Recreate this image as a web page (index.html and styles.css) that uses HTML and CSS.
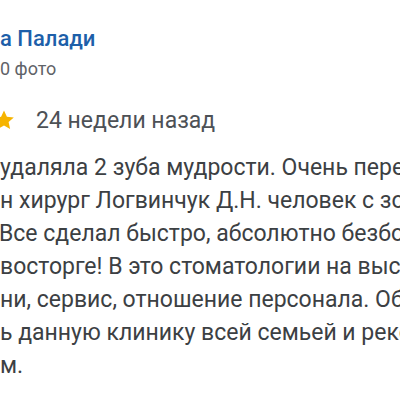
FILE: index.html
```html
<!DOCTYPE html>
<html lang="ru">
<head>
<meta charset="utf-8">
<link rel="stylesheet" href="styles.css">
</head>
<body>
<div class="review">
  <div class="author">
    <div class="name">а Палади</div>
    <div class="meta">0 фото</div>
  </div>
  <div class="rating">
    <svg class="star" viewBox="0 0 24 24" width="24" height="24"><path d="M12 2.5l2.9 6.3 6.9.7-5.2 4.6 1.5 6.8L12 17.4l-6.1 3.5 1.5-6.8-5.2-4.6 6.9-.7z" fill="#f6b400"/></svg>
    <span class="date">24 недели назад</span>
  </div>
  <div class="text">
    <div class="line">удаляла 2 зуба мудрости. Очень переживала.</div>
    <div class="line">н хирург Логвинчук Д.Н. человек с золотыми</div>
    <div class="line l3">Все сделал быстро, абсолютно безболезненно.</div>
    <div class="line l4">восторге! В это стоматологии на высоте всё:</div>
    <div class="line">ни, сервис, отношение персонала. Обслуживаемся</div>
    <div class="line">ь данную клинику всей семьей и рекомендуем</div>
    <div class="line">м.</div>
  </div>
</div>
</body>
</html>
```
FILE: styles.css
```css
html, body {
  margin: 0;
  padding: 0;
  background: #ffffff;
}
body {
  width: 400px;
  height: 400px;
  overflow: hidden;
  font-family: Roboto, "Noto Sans", sans-serif;
}
.review {
  padding-top: 26px;
}
.author {
  display: flex;
  flex-direction: column;
}
.name {
  font-size: 22px;
  line-height: 26px;
  color: #1d5fa9;
  font-weight: 500;
  white-space: nowrap;
}
.meta {
  font-size: 18px;
  line-height: 22px;
  color: #5f6368;
  margin-top: 6px;
  white-space: nowrap;
}
.rating {
  display: flex;
  align-items: center;
  margin-top: 27px;
  height: 26px;
}
.star {
  margin-left: -8px;
}
.date {
  margin-left: 20px;
  font-size: 23px;
  color: #4d5156;
  white-space: nowrap;
}
.text {
  margin-top: 18px;
  color: #3c4043;
  font-size: 23px;
  line-height: 33px;
}
.line {
  white-space: nowrap;
}
.l3 { margin-left: -1px; }
.l4 { margin-left: 0; }
```
